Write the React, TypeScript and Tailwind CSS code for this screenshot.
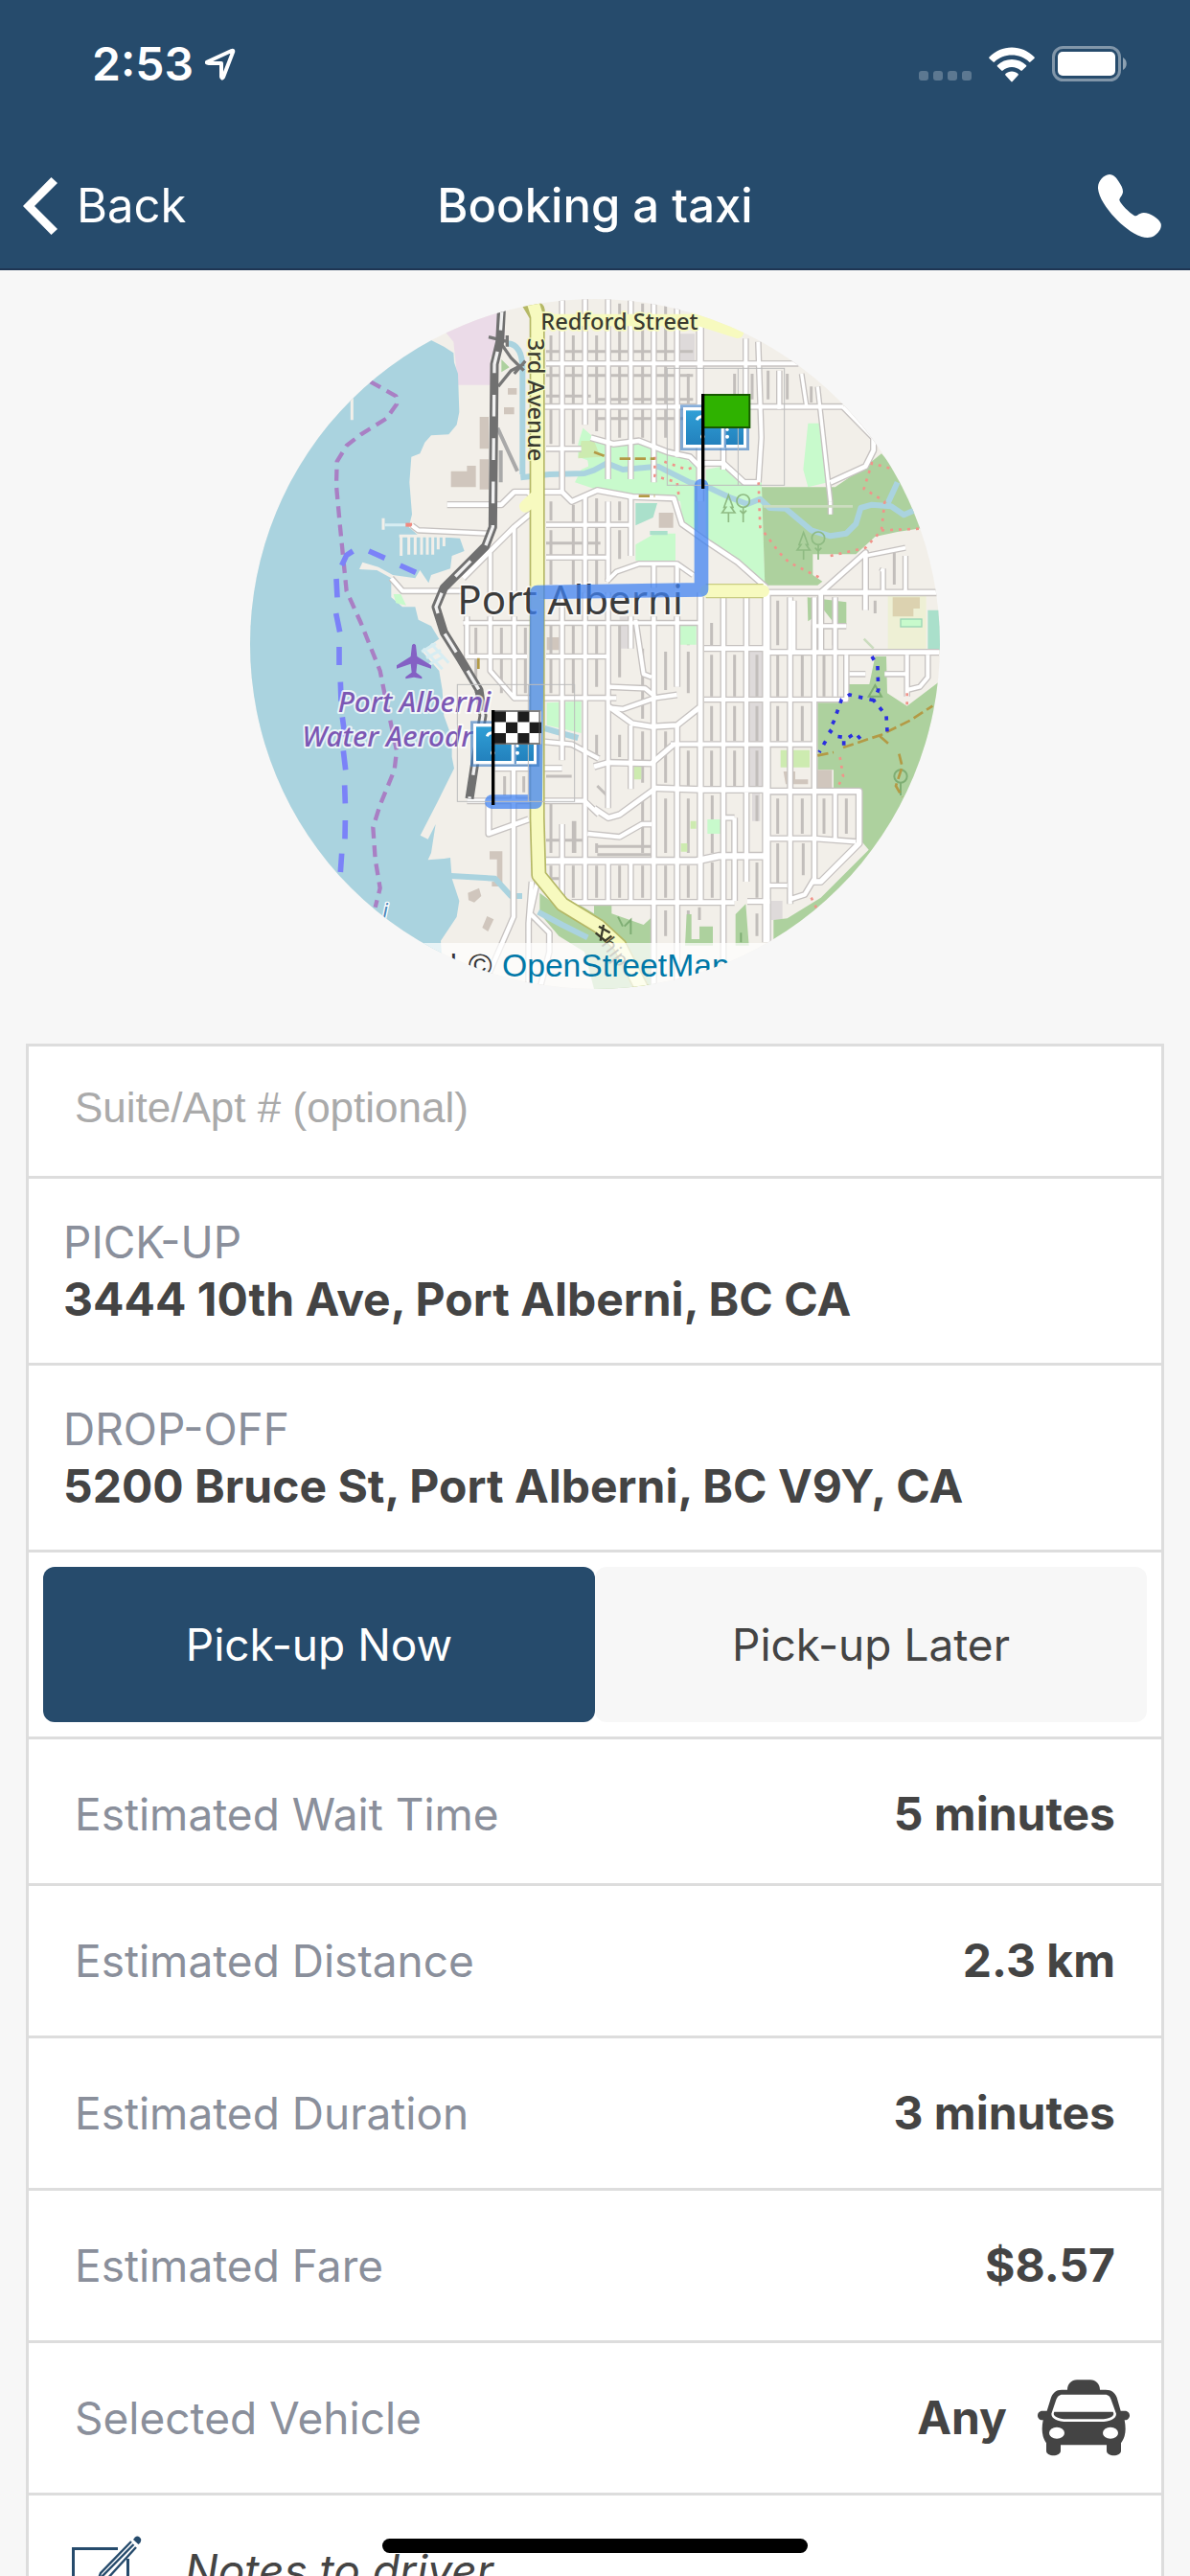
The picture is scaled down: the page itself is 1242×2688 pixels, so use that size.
import React from "react";

const OSM_FONT = '"Noto Sans", "Open Sans", sans-serif';

/* ---------- status bar and navigation icons ---------- */

function LocationArrow() {
  return (
    <svg viewBox="0 0 32 34" className="h-[34px] w-8" fill="none" aria-hidden="true">
      <path d="M2.5 14.5 L27.5 3 Q30 2 29 4.600 L19 30.500 Q17.500 33 17 30 V16 H4 Q0.500 15.500 2.500 14.500 Z" stroke="#fff" strokeWidth="4" strokeLinejoin="round" />
    </svg>
  );
}

function Wifi() {
  return (
    <svg viewBox="0 0 48 37" className="h-[37px] w-12" fill="#fff" aria-hidden="true">
      <path d="M24 0.500 C33 0.500 41 4 47.500 10.500 C48 11 48 11.500 47.500 12 L43.500 15.500 C43 16 42.500 16 42 15.500 C37 10.800 31 8.500 24 8.500 C17 8.500 11 10.800 6 15.500 C5.500 16 5 16 4.500 15.500 L0.500 12 C0 11.500 0 11 0.500 10.500 C7 4 15 0.500 24 0.500 Z" />
      <path d="M24 13 C29.700 13 35 15 39 19 C39.500 19.500 39.500 20 39 20.500 L34.800 24.500 C34.300 25 33.800 25 33.300 24.500 C30.700 22.200 27.500 21 24 21 C20.500 21 17.300 22.200 14.700 24.500 C14.200 25 13.700 25 13.200 24.500 L9 20.500 C8.500 20 8.500 19.500 9 19 C13 15 18.300 13 24 13 Z" />
      <path d="M24 25.500 C26.500 25.500 28.800 26.400 30.600 28 C31 28.500 31 29 30.600 29.400 L24.700 36 C24.300 36.500 23.700 36.500 23.300 36 L17.400 29.400 C17 29 17 28.500 17.400 28 C19.200 26.400 21.500 25.500 24 25.500 Z" />
    </svg>
  );
}

function Battery() {
  return (
    <svg viewBox="0 0 80 38" className="h-[38px] w-20" aria-hidden="true">
      <rect x="1.500" y="1.500" width="69" height="34" rx="10" fill="none" stroke="#fff" strokeOpacity="0.420" strokeWidth="3" />
      <rect x="6" y="6" width="60" height="25" rx="5" fill="#fff" />
      <path d="M74 12 C79 14.500 79 22.500 74 25 Z" fill="#fff" fillOpacity="0.480" />
    </svg>
  );
}

function Phone() {
  return (
    <svg viewBox="0 0 166 198" preserveAspectRatio="none" className="h-[66px] w-[66px]" fill="#fff" aria-hidden="true">
      <path d="M30 0 C42 0 49 12 54 22 C61 35 67 46 65 58 C63 68 57 72 56 80 C62 97 80 116 96 130 C104 131 106 121 120 120 C137 120 160 138 165 154 C168 168 160 182 147 193 C139 199 125 199 114 195 C88 185 62 158 44 135 C22 106 2 72 0 44 C-1 24 12 2 30 0 Z" />
    </svg>
  );
}

/* ---------- list icons ---------- */

function TaxiIcon() {
  return (
    <svg viewBox="129 129 288 240" className="h-20 w-24 shrink-0" aria-hidden="true">
      <path fill="#444" fillRule="evenodd" d="M222 161 C222 143 235 130 252 130 H294 C311 130 324 143 324 161 H342 C362 161 371 171 377 185 L389 227 H402 C422 227 422 256 402 256 H401 C406 282 406 306 390 328 V352 C390 372 345 372 345 352 V334 H201 V352 C201 372 156 372 156 352 V328 C141 306 141 282 146 256 H144 C124 256 124 227 144 227 H158 L171 185 C177 171 186 161 204 161 Z" />
      <path fill="#fff" d="M206 176 H340 C351 176 356 183 359 192 L375 236 C375 251 357 261 325 261 H223 C190 261 172 251 172 236 L187 192 C191 183 196 176 206 176 Z" />
      <path fill="#444" d="M181 230 H365 C369 237 366 242 360 246 C352 251 340 253 325 253 H221 C206 253 195 251 187 246 C180 242 177 237 181 230 Z" />
      <ellipse cx="189" cy="296" rx="24" ry="18" fill="#fff" />
      <ellipse cx="357" cy="296" rx="24" ry="18" fill="#fff" />
    </svg>
  );
}

function NoteIcon() {
  return (
    <svg viewBox="0 0 74 74" className="h-[74px] w-[74px] shrink-0" fill="none" stroke="#264b6c" strokeWidth="3" aria-hidden="true">
      <path d="M48 13.500 H1.500 V72.500 H58.500 V24" />
      <path d="M62 6 L30 39 L26 50 L36 46 L67 12 M64.500 9 L31 43" strokeWidth="2.400" />
      <path d="M66 1.500 Q69 -1 72 3 Q73 7 69.500 9 L64 4 Z" fill="#264b6c" stroke="none" />
    </svg>
  );
}

/* ---------- map ---------- */

type Line = [string, number];

const streets: Line[] = [
  // north grid, vertical
  ["M1010 66V670", 12], ["M1082 66V460M1082 680V960", 12], ["M1154 66V630", 12], ["M1225 66V630", 12],
  ["M1297 66V640", 12], ["M1370 66V560", 12], ["M1442 150V700", 18], ["M1515 380V600", 12],
  ["M1585 190V380", 12], ["M1624 200L1634 500L1625 640", 12], ["M1690 290V410", 12],
  ["M1760 300L1775 400M1810 340L1850 700", 10], ["M1850 700L1850 740", 10],
  // north grid, horizontal
  ["M960 268H1750", 12], ["M955 403H1890", 13], ["M960 535H1070", 12], ["M1100 500L1170 520L1250 510L1340 545L1410 560L1450 600", 14],
  ["M905 670H1010L1040 700L1120 665L1230 685L1360 690L1385 770L1470 830L1560 890L1650 970", 14],
  ["M960 773H1225M960 875H1150M1225 690V870M1150 950L1180 920L1250 895H1370L1420 930", 12],
  ["M1297 900V970M1370 900V970M1154 700V950", 12],
  ["M1455 580H1515L1580 640H1625M1890 403L1985 500V540L1960 590L1850 640", 14],
  // waterfront
  ["M650 710H820L860 670H905L932 720L860 780L700 940", 14], ["M540 775L560 790L780 800", 12],
  ["M475 940L510 980H700", 13], ["M860 780V980M785 860V990", 11],
  // centre and south, horizontal
  ["M700 1080H1440", 11], ["M710 1185H900M960 1185H1150", 12], ["M860 1315H1180", 13],
  ["M1640 985H2190", 15], ["M1455 1160H1650M1650 1172H2190", 14], ["M1455 1320H1900V1180", 12],
  ["M1350 1460H1800", 13], ["M1300 1597L1450 1602H1650M1650 1607H1940V1770L1820 1890H1795", 16],
  ["M1650 1755H1800L1930 1765", 13], ["M960 1825H1430L1500 1810H1650", 19],
  ["M1040 1955H1550M1590 1952H1660", 14], ["M800 1535H1010", 14], ["M712 1637H1080L1125 1680", 13],
  ["M955 1452L1040 1460L1125 1505", 13], ["M780 1640V1740L905 1695", 14],
  ["M1110 1530L1155 1517L1290 1520L1360 1460", 15],
  ["M1154 1280L1270 1285L1300 1310M1154 1345L1200 1350L1300 1315L1370 1305", 13],
  ["M1154 1340L1230 1395L1290 1405L1370 1400L1440 1345", 15],
  ["M1110 1660L1155 1690L1190 1680L1300 1600", 15], ["M1090 1740L1190 1750L1260 1710H1290", 13],
  ["M1650 1902H1715", 12], ["M1910 1240H1960M2020 1240H2090M2090 1180V1310", 12],
  ["M2155 1180V1250L2130 1280L2090 1290", 12], ["M1820 985V1170M1960 985V1040M1960 985V860L1820 985", 14],
  ["M2085 870V985M2015 910V985M1960 870L2085 845M2010 920L2015 910", 11],
  ["M1735 1010V1170M1800 1180V1090H1900", 12],
  // centre and south, vertical
  ["M712 1060V1190M785 1060V1230L860 1315V1060", 12], ["M858 1530V2000L760 2226", 13],
  ["M915 1890L905 2020V2226M930 1900L910 1990L970 2050V2110L940 2226", 13],
  ["M1010 985V1510M1010 1710V1955M1082 985V1955", 12], ["M1154 985V1660M1154 1830V1955", 12],
  ["M1225 1060V1160M1225 1400V1600M1225 1830V1955M1240 1070L1265 1240L1290 1250", 12],
  ["M1297 1060V2226M1370 1060V1280M1370 1400V2226", 13], ["M1443 985V1950", 15],
  ["M1515 1000V2226M1587 1000V1600M1587 1610V1890M1550 1690V1950M1515 1690H1550", 13],
  ["M1650 985V2080", 21], ["M1724 1000V1960M1800 1000V1880L1770 1930L1724 1945", 13],
  ["M1865 1000V1310M1865 1610V1760", 12],
];

const alleys =
  "M975 180V520M1045 180V520M1118 180V480M1190 80V500M1262 80V500M1334 80V500M1405 300V500" +
  "M1550 300V380M1605 300V380M1655 290V380M1715 300V380M1790 340V390" +
  "M960 230H1420M960 305H1420M960 370H1100M1120 440H1420M1120 380H1420" +
  "M975 700V760M975 790V960M1045 710V960M1118 690V960M1190 700V760M1190 790V880M960 830H1130" +
  "M740 1095V1300M820 1095V1300M895 1095V1300M975 1080V1300M1045 1080V1300M1118 1080V1280" +
  "M1190 1080V1250M1334 1170V1290M1405 1170V1300M1405 1100V1150M1262 1160V1380M1262 1420V1580M1190 1430V1500" +
  "M1262 1630V1800M1262 1840V1940M1334 1420V1580M1405 1480V1590M1334 1630V1800M1405 1630V1800" +
  "M1478 1080V1150M1550 1180V1310M1478 1180V1310M1478 1340V1450M1550 1340V1450M1478 1480V1590M1550 1480V1590" +
  "M1620 1180V1310M1620 1340V1450M1620 1480V1590M1620 1620V1700M1480 1620V1800M1480 1830V1940M1620 1830V1940" +
  "M1685 1010V1150M1685 1180V1310M1685 1340V1450M1762 1180V1310M1762 1340V1450M1830 1180V1310" +
  "M1685 1630V1740M1762 1630V1740M1900 1630V1740M1830 1630V1740M1685 1770V1900M1765 1770V1870" +
  "M975 1640V1800M1045 1700V1800M1118 1770V1800M975 1840V1880M1045 1840V1940M1118 1840V1940M1190 1840V1940M1334 1840V1940M1405 1840V1940" +
  "M830 1560V1620M890 1560V1610M960 1560H1040M960 1760H1080M975 1880H1000M1120 1780H1290M1120 1805H1290" +
  "M1334 1980V2060M1405 1980V2060M1440 1970V2010M1620 1990V2060M1050 1700V1800M1120 1590L1150 1620M1118 1430V1500" +
  "M1990 1010V1050M2050 860V960M1860 1000V1150M1600 640V700";

function Casing({ lines }: { lines: Line[] }) {
  return (
    <>
      {lines.map(([d, w], i) => (
        <path key={i} d={d} strokeWidth={w + 8} stroke="#c6c2c0" />
      ))}
      {lines.map(([d, w], i) => (
        <path key={`f${i}`} d={d} strokeWidth={w} stroke="#fff" />
      ))}
    </>
  );
}

function MapMarker({ x, y, kind }: { x: number; y: number; kind: "pickup" | "dropoff" }) {
  const cells = [0, 1, 2].flatMap((r) => [0, 1, 2, 3].map((c) => ({ r, c })));
  return (
    <g transform={`translate(${x} ${y})`}>
      <rect x="41" y="114" width="216" height="143" fill="#3b7cc4" fillOpacity="0.620" />
      <rect x="50" y="122" width="198" height="127" fill="#fff" />
      <rect x="59" y="132" width="110" height="107" fill="url(#pin)" />
      <rect x="178" y="122" width="7" height="127" fill="#6f9fd0" />
      <rect x="185" y="132" width="54" height="107" fill="url(#pin)" />
      <path d="M93 162C97 148 116 148 121 158C124 172 111 174 111 190" fill="none" stroke="#fff" strokeWidth="9" />
      <circle cx="111" cy="214" r="7" fill="#fff" />
      <circle cx="188" cy="214" r="6" fill="#fff" />
      <circle cx="188" cy="192" r="5" fill="#fff" />
      <rect width="367" height="366" fill="none" stroke="#bdbdbd" strokeWidth="3" />
      <path d="M222 0V366" stroke="#bdbdbd" strokeWidth="3" />
      {kind === "pickup" ? (
        <rect x="111" y="83" width="147" height="102" fill="#2fb200" stroke="#175a00" strokeWidth="6" />
      ) : (
        <g>
          <rect x="108" y="80" width="153" height="108" fill="#fff" />
          {cells.map(({ r, c }) => (
            <rect key={`${r}${c}`} x={115 + c * 37} y={84 + r * 34} width="37" height="34" fill={(r + c) % 2 ? "#fff" : "#1d1d1d"} />
          ))}
          <rect x="111" y="83" width="147" height="102" fill="none" stroke="#4a4a4a" strokeOpacity="0.700" strokeWidth="6" />
        </g>
      )}
      <rect x="107" y="80" width="10" height="297" fill="#000" />
    </g>
  );
}

function Tree({ x, y }: { x: number; y: number }) {
  return (
    <g transform={`translate(${x} ${y})`} stroke="#8fbb83" strokeWidth="5" fill="none">
      <path d="M20 85V55M0 55L12 38H6L20 0L34 38H28L40 55Z" />
      <circle cx="66" cy="18" r="20" />
      <path d="M66 38V85M56 48L66 58L76 48" />
    </g>
  );
}

function RouteMap() {
  return (
    <svg viewBox="33 66 2160 2160" role="img" aria-label="Route through Port Alberni" className="block h-full w-full" fill="none">
      <defs>
        <linearGradient id="pin" x1="0" y1="0" x2="0" y2="1">
          <stop offset="0" stopColor="#2f9fd6" />
          <stop offset="1" stopColor="#2381bd" />
        </linearGradient>
      </defs>
      <rect x="33" y="66" width="2160" height="2160" fill="#f2efe9" />

      <path fill="#ebdbe8" d="M560 66H830V200L785 250V335H684L670 200Z" />
      <path fill="#aad3df" d="M0 66H560L600 195L640 215L670 235L672 265L684 300L688 420L680 460L655 490L600 493L580 515L565 550L538 560L532 640L540 740L530 780L560 806L690 815L704 855L665 870L660 910L600 930L592 955L565 915L550 940L480 930L435 905L385 890L375 912L430 915L475 940L475 1000L510 1030L550 1030L560 1070L600 1090L625 1130L570 1168L625 1230L635 1290L640 1370L665 1440L665 1500L672 1535L620 1640L566 1745L590 1757L614 1710L600 1800L590 1822L640 1818L660 1815L665 1880L688 1950L680 2000L630 2075L640 2226H0Z" />
      <path stroke="#f2efe9" strokeWidth="9" d="M352 360V445M450 752V788M500 808H665M506 808V870M530 808V866M550 808V866M570 808V866M588 808V866M605 808V866M622 808V850M640 808V840" />
      <path stroke="#d7edf2" strokeWidth="9" d="M455 773H525M570 1170L615 1145M585 1190L630 1165M595 1210L640 1185M575 1160L635 1225M600 1145L655 1205" />
      <rect x="520" y="767" width="20" height="12" fill="#f08a80" />

      <path fill="#d0c6bd" d="M752 435H780V535H752ZM662 605H712V588H740V655H662ZM752 568H780V662H752ZM840 345H868V365H840ZM828 405H860V427H828ZM783 1795H823V1905H790V1890H806V1820H783ZM715 1925L750 1910L757 1935L735 1955L717 1948ZM775 1998L796 2008L778 2046L760 2034ZM962 1125H1000V1165H962Z" />
      <path fill="#dedada" d="M1190 1060H1220V1160H1190ZM1595 1165H1640V1600H1595ZM1605 1610H1630V1700H1605ZM1378 175H1425V280H1378ZM1665 1950H1700V2010H1665Z" />
      <path d={alleys} stroke="#c2bebb" strokeWidth="9" />

      <g fill="#c8facc">
        <path d="M1050 640L1070 600L1115 580L1060 560V520L1075 470L1110 500L1170 635L1200 520L1250 512L1310 540L1380 555L1435 595V820L1390 780L1380 700L1350 690L1230 680L1110 660Z" />
        <path d="M1075 470L1110 500L1170 520L1250 512L1310 540V640H1100Z" />
        <path d="M1460 600L1510 590L1570 645L1635 640L1645 960L1580 905L1460 820Z" />
        <path d="M1780 455H1816L1812 412H1825L1842 640L1780 655L1765 600Z" />
        <path d="M1240 835L1300 800H1365V885H1240Z" />
        <path d="M1364 1080H1430V1148H1364ZM962 1330L1070 1325V1425L962 1400Z" />
        <path d="M1465 1695H1506V1740H1465ZM482 990H505L522 1025L490 1018Z" />
      </g>
      <path fill="#cdebb0" d="M1070 510H1110L1130 560L1060 565ZM1694 1478H1785V1532H1694ZM1235 1530H1258V1570H1235ZM1382 1770H1402V1796H1382ZM1412 1700H1430V1724H1412Z" />
      <g fill="#add19e">
        <path d="M1635 655H1865L1960 590L2010 550L2045 590L2110 700L2193 775L2060 795L1990 810L1930 865H1795V930L1825 950L1810 962H1645Z" />
        <path d="M1778 1000L1900 1015V1085H1865L1830 1040L1780 1075Z" />
        <path d="M1810 1330H1890V1272H1972L1990 1185H2025L2028 1300L2090 1340L2193 1262V2226H1672V2010L1715 2005L1820 1940L1970 1790L1945 1760V1600H1860V1540H1810Z" />
        <path d="M1110 1965H1165V1990L1265 2025L1292 2000V2226H1110Z" />
        <path d="M940 1925L1000 1970L1060 1960L1110 1990V2226L1080 2110L1000 2060L940 1990Z" />
        <path d="M1400 1992H1415V2070H1440V2030H1482V2090H1395ZM1553 1992L1585 1960L1595 2090H1553ZM820 255L845 280L820 295Z" />
      </g>
      <path fill="#aae0cb" d="M1240 705H1308L1295 750L1240 775ZM2155 1040H2193V1165H2155ZM1285 792H1340V805H1285Z" />
      <path fill="#d0c6bd" d="M1313 735H1358V782H1313ZM1805 1540H1855V1598H1805ZM1703 1545H1740V1570H1780V1585H1710Z" />
      <path fill="#eef0d5" d="M2030 990H2150V1165H2030Z" />
      <path fill="#dcd2b0" d="M2045 1000H2130V1035H2110V1060H2045Z" />
      <rect x="2070" y="1068" width="66" height="24" fill="#c8facc" stroke="#9ad6b4" strokeWidth="4" />

      <path stroke="#aad3df" strokeWidth="18" strokeLinejoin="round" d="M840 205Q890 210 886 300V615M880 625L970 615L1080 612L1110 602L1150 580L1200 600L1310 590L1410 640L1460 652L1530 685L1590 708L1630 692L1660 720L1710 722L1790 790L1850 808L1900 800L1930 770L1945 720L1980 710L2040 715L2080 742L2130 720M2030 705L2060 640M662 1872L800 1880L850 1935H885M935 1985L1010 2025L1090 2065M955 1410L1060 1440" />

      <g strokeLinejoin="round">
        <Casing lines={streets} />
        <path stroke="#cbdcbf" strokeWidth="8" d="M1640 715H1920M1955 1130L1985 1160" />
      </g>

      <Tree x={1511} y={680} />
      <Tree x={1746} y={797} />
      <circle cx="2070" cy="1560" r="20" stroke="#7fae74" strokeWidth="6" />
      <path stroke="#7fae74" strokeWidth="6" d="M2070 1580V1620M1970 1310L1990 1275L2010 1310ZM1185 2000L1200 2030M1225 2055V2010L1205 2030M1570 2050V2080" />

      <g stroke="#f0948a" strokeWidth="8" strokeDasharray="9 18">
        <path d="M1300 560V620L1370 640L1375 680M1330 575L1400 600L1430 590M1625 640L1630 780L1690 860L1720 890L1820 940M1850 870L1960 845L2010 790L2020 700L1955 660L1980 580L2050 600M2010 790L2130 785M1880 1500L1890 1560L1870 1600" />
        <path d="M2090 1300V1350M1790 1940L1810 1980L1840 1960" />
      </g>
      <g stroke="#b39a45" strokeWidth="8" strokeDasharray="34 14">
        <path d="M1110 545L1150 560M1190 566H1300M1250 683H1300M1810 1495L1860 1485M1890 1470L2010 1430L2100 1385L2170 1340M2005 1435L2040 1465M2065 1490L2075 1530L2055 1590L2075 1625M748 1190V1235" />
      </g>
      <g stroke="#2a2ee0" strokeWidth="11" strokeDasharray="13 22">
        <path d="M1980 1185L1998 1215L2000 1290L1985 1322L2025 1370L2028 1420M1985 1322L1910 1305L1885 1320L1860 1390L1845 1415L1870 1435L1905 1440L1928 1425L1955 1455M1835 1450L1815 1485M1892 1450V1475" />
      </g>

      {/* arterial roads */}
      <g strokeLinejoin="round" strokeLinecap="round">
        <path stroke="#b5b866" strokeWidth="48" d="M932 100V1690L937 1870L1010 1960L1125 2030L1190 2090L1260 2226M900 66L932 120" />
        <path stroke="#c9cc83" strokeWidth="46" strokeLinecap="butt" d="M1460 980H1640" />
        <path stroke="#f7fabf" strokeWidth="38" d="M915 66L932 120V1690L937 1870L1010 1960L1125 2030L1190 2090L1260 2226M940 132H1440L1560 170M1460 980H1640M895 715L932 680" />
      </g>

      {/* railway */}
      <g strokeLinejoin="round">
        <path stroke="#a9a9a9" strokeWidth="12" d="M808 470L840 540L870 605M818 540V640" />
        <path stroke="#777" strokeWidth="10" d="M780 185L840 200M838 180V215M815 200L850 250L890 290M890 270L850 290L810 340M895 260L860 300" />
        <path stroke="#707070" strokeWidth="27" d="M822 66L815 200L798 270L793 780L770 840L640 970L615 1030L640 1110L690 1190L750 1290L762 1370L740 1500L720 1630" />
        <path stroke="#f1f1f1" strokeWidth="10" strokeDasharray="68 68" d="M822 96L815 200L798 270L793 780L770 840L640 970L615 1030L640 1110L690 1190L750 1290L762 1370L740 1500L720 1630" />
      </g>

      {/* ferry lines */}
      <path stroke="#a97fc4" strokeWidth="13" strokeDasharray="36 22" strokeLinejoin="round" d="M410 325L490 370L492 395L460 440L380 490L335 525L305 575L303 650L315 780L325 880L335 980L380 1080L440 1230L460 1330L492 1480L485 1540L440 1650L418 1720L425 1820L440 1910L425 1970" />
      <path stroke="#7b82f8" strokeWidth="17" strokeLinejoin="round" d="M552 922L503 900M455 877L405 855M355 855L335 868L320 900M303 942L306 1000M302 1050L314 1108M312 1155V1212M316 1265L318 1325M322 1375L330 1435M329 1588L331 1645M331 1698L330 1756M320 1802L316 1860M325 1480L332 1540" />
      <text x="448" y="2004" fontFamily={OSM_FONT} fontSize="66" fill="#4a86b8" stroke="#fff" strokeWidth="8" paintOrder="stroke" fontStyle="italic">i</text>

      {/* place names */}
      <g fontFamily={OSM_FONT} strokeLinejoin="round" paintOrder="stroke">
        <text x="943" y="162" fontSize="71" fontWeight="500" fill="#3a3a30" stroke="#f7fabf" strokeWidth="10">Redford Street</text>
        <text transform="translate(904 188) rotate(90)" fontSize="71" fontWeight="500" fill="#3a3a30" stroke="#f7fabf" strokeWidth="8">3rd Avenue</text>
        <text x="682" y="1053" fontSize="126" fill="#3b3b3b" stroke="#fff" strokeOpacity="0.600" strokeWidth="10">Port Alberni</text>
        <g fontSize="89" fontStyle="italic" fontWeight="500" fill="#7c57b4" stroke="#fff" strokeOpacity="0.750" strokeWidth="12">
          <text x="308" y="1360">Port Alberni</text>
          <text x="196" y="1468">Water Aerodr</text>
        </g>
        <text transform="translate(1130 2086) rotate(52)" fontSize="64" fill="#55553c">hip</text>
      </g>
      <path stroke="#3b3b2c" strokeWidth="7" d="M1115 2050L1145 2075L1165 2060M1125 2030L1160 2050M1140 2025L1130 2075" />
      <path fill="#8461c4" d="M540 1150Q546 1140 552 1150L556 1185L600 1213V1223L556 1208L553 1235L571 1249V1255L546 1250L520 1255V1249L539 1235L536 1208L492 1223V1213L536 1185Z" />

      {/* route */}
      <path stroke="#3f82f2" strokeOpacity="0.740" strokeWidth="44" strokeLinecap="round" strokeLinejoin="round" d="M1446 651V976L932 984L926 1640H790" />
      <MapMarker x={1339} y={283} kind="pickup" />
      <MapMarker x={682} y={1273} kind="dropoff" />

      {/* attribution strip */}
      <rect x="33" y="2082" width="2160" height="144" fill="#fff" fillOpacity="0.720" />
      <g fontFamily='"Liberation Sans", Arial, sans-serif' fontSize="101">
        <text x="657" y="2188" fill="#333">|</text>
        <text x="716" y="2188" fill="#333">©</text>
        <a href="#osm"><text x="822" y="2188" fill="#0078a8">OpenStreetMap</text></a>
      </g>
    </svg>
  );
}

/* ---------- screen ---------- */

function StatusBar() {
  return (
    <div className="flex h-[150px] items-center justify-between pr-16 pb-4 pl-24 text-white">
      <div className="flex items-center gap-3">
        <span className="text-[48px] leading-none font-semibold">2:53</span>
        <LocationArrow />
      </div>
      <div className="flex items-center gap-[18px]">
        <div className="flex gap-[5px] pt-6">
          {[0, 1, 2, 3].map((i) => (
            <span key={i} className="h-[10px] w-[10px] rounded-[3px] bg-white/25" />
          ))}
        </div>
        <Wifi />
        <Battery />
      </div>
    </div>
  );
}

function AddressRow({ label, value }: { label: string; value: string }) {
  return (
    <div className="px-9 py-9 leading-[60px]">
      <p className="text-[46px] text-[#8a8f9b]">{label}</p>
      <p className="text-[48px] font-bold">{value}</p>
    </div>
  );
}

const estimates = [
  { label: "Estimated Wait Time", value: "5 minutes", pad: "pt-[48px] pb-[42px]" },
  { label: "Estimated Distance", value: "2.3 km", pad: "py-[48px]" },
  { label: "Estimated Duration", value: "3 minutes", pad: "py-[48px]" },
  { label: "Estimated Fare", value: "$8.57", pad: "py-[48px]" },
];

export default function App() {
  const [later, setLater] = React.useState(false);
  const segment = "h-[162px] flex-1 rounded-xl text-[46px] ";
  return (
    <div className="relative flex h-screen flex-col overflow-hidden bg-[#f7f7f7] font-['Inter',sans-serif] text-[#444]">
      <header className="shrink-0 border-b-2 border-[#1e3553] bg-[#264b6c] text-white">
        <StatusBar />
        <nav className="grid h-[130px] grid-cols-[1fr_auto_1fr] items-center px-6">
          <button type="button" className="flex items-center gap-5 justify-self-start text-[49px]">
            <svg viewBox="0 0 36 60" className="h-[60px] w-9" aria-hidden="true">
              <path d="M29.500 0 L36 6 L12 30 L36 54 L29.500 60 L0 30 Z" fill="#fff" />
            </svg>
            Back
          </button>
          <h1 className="text-[49px] font-medium">Booking a taxi</h1>
          <button type="button" aria-label="Call" className="mr-1.5 justify-self-end">
            <Phone />
          </button>
        </nav>
      </header>

      <main className="flex-1 overflow-y-auto [scrollbar-width:none]">
        <div className="flex justify-center pt-[30px] pb-[57px]">
          <div className="h-[720px] w-[720px] overflow-hidden rounded-full">
            <RouteMap />
          </div>
        </div>

        <form className="mx-[27px] divide-y-[3px] divide-[#ddd] border-[3px] border-[#ddd] bg-white">
          <input
            aria-label="Suite/Apt # (optional)"
            placeholder="Suite/Apt # (optional)"
            className="block h-[138px] w-full px-12 pb-2 font-['Liberation_Sans',Arial,sans-serif] text-[44px] outline-none placeholder:text-[#aaa]"
          />
          <AddressRow label="PICK-UP" value="3444 10th Ave, Port Alberni, BC CA" />
          <AddressRow label="DROP-OFF" value="5200 Bruce St, Port Alberni, BC V9Y, CA" />
          <div className="flex p-[15px]">
            <button type="button" onClick={() => setLater(false)} className={segment + (later ? "bg-[#f7f7f7]" : "bg-[#264b6c] text-white")}>
              Pick-up Now
            </button>
            <button type="button" onClick={() => setLater(true)} className={segment + (later ? "bg-[#264b6c] text-white" : "bg-[#f7f7f7]")}>
              Pick-up Later
            </button>
          </div>
          {estimates.map((e) => (
            <div key={e.label} className={"flex justify-between px-12 leading-[60px] " + e.pad}>
              <span className="text-[46px] text-[#8a8f9b]">{e.label}</span>
              <span className="text-[48px] font-bold">{e.value}</span>
            </div>
          ))}
          <button type="button" className="flex h-[159px] w-full items-center justify-between pr-[33px] pl-12 leading-[60px]">
            <span className="text-[46px] text-[#8a8f9b]">Selected Vehicle</span>
            <span className="flex items-center gap-8 text-[48px] font-bold">
              Any
              <TaxiIcon />
            </span>
          </button>
          <label className="flex items-start gap-11 px-[45px] pt-[42px] pb-12">
            <NoteIcon />
            <input
              aria-label="Notes to driver"
              placeholder="Notes to driver"
              className="mt-1.5 h-[60px] min-w-0 flex-1 text-[46px] italic outline-none placeholder:text-[#444]"
            />
          </label>
        </form>
      </main>

      <div className="absolute bottom-6 left-1/2 h-[15px] w-[444px] -translate-x-1/2 rounded-full bg-black" />
    </div>
  );
}
